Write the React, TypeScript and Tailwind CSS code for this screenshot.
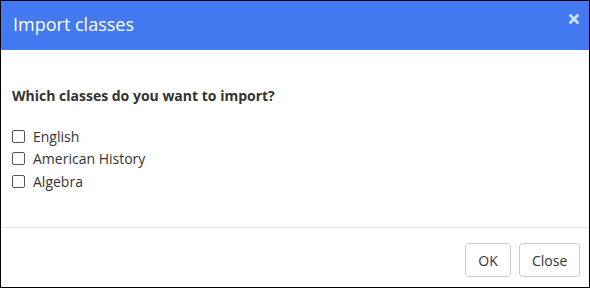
const classes = ["English", "American History", "Algebra"];

export default function App() {
  return (
    <div
      className="w-[590px] h-[288px] border border-black bg-white flex flex-col text-[#333]"
      style={{ fontFamily: '"Open Sans", sans-serif' }}
    >
      <header className="h-[49px] bg-[#437af1] flex items-center justify-between pl-3 pr-[8px] pb-[3px]">
        <h1 className="text-[18px] text-white leading-none">Import classes</h1>
        <button className="w-[14px] h-[14px] flex items-center justify-center opacity-85 mb-[10px]">
          <svg width="10" height="10" viewBox="0 0 10 10">
            <path d="M1.5 1.5 L8.5 8.5 M8.5 1.5 L1.5 8.5" stroke="#e8eefc" strokeWidth="2.8" strokeLinecap="square" />
          </svg>
        </button>
      </header>
      <main className="flex-1 px-[11px] pt-[36px]">
        <p className="text-[14px] font-bold leading-[20px]">Which classes do you want to import?</p>
        <ul className="mt-[19px]">
          {classes.map((c) => (
            <li key={c} className="flex items-center h-[22.5px] text-[14px]">
              <span className="w-[13px] h-[13px] border border-[#555] rounded-[2px] bg-white mr-[8px]" />
              <span>{c}</span>
            </li>
          ))}
        </ul>
      </main>
      <footer className="border-t border-[#e5e5e5] flex justify-end gap-[8px] pt-[15px] pb-[10px] pr-[9px]">
        <button className="h-[34px] px-[12px] w-[46px] border border-[#ccc] rounded-[4px] text-[14px] text-[#333] bg-white">
          OK
        </button>
        <button className="h-[34px] px-[12px] w-[61px] border border-[#ccc] rounded-[4px] text-[14px] text-[#333] bg-white">
          Close
        </button>
      </footer>
    </div>
  );
}
